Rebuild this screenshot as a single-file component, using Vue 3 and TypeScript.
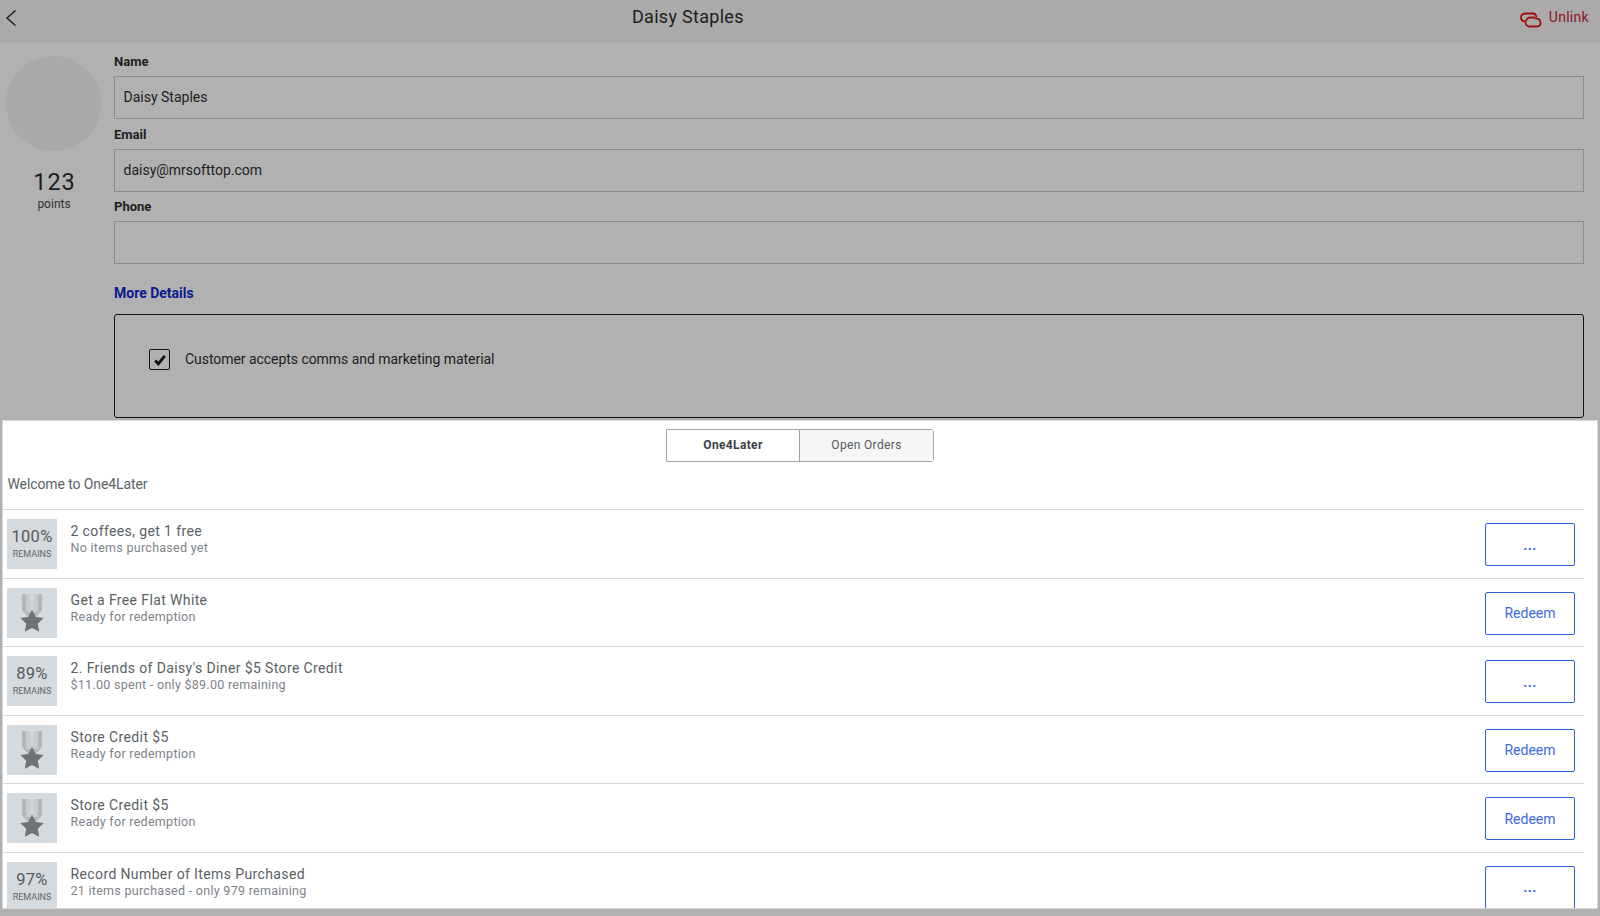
<script setup lang="ts">
interface Row {
  title: string
  sub: string
  pct?: string
  action: string
}
const rows: Row[] = [
  { title: '2 coffees, get 1 free', sub: 'No items purchased yet', pct: '100%', action: '...' },
  { title: 'Get a Free Flat White', sub: 'Ready for redemption', action: 'Redeem' },
  { title: "2. Friends of Daisy's Diner $5 Store Credit", sub: '$11.00 spent - only $89.00 remaining', pct: '89%', action: '...' },
  { title: 'Store Credit $5', sub: 'Ready for redemption', action: 'Redeem' },
  { title: 'Store Credit $5', sub: 'Ready for redemption', action: 'Redeem' },
  { title: 'Record Number of Items Purchased', sub: '21 items purchased - only 979 remaining', pct: '97%', action: '...' },
]
</script>

<template>
  <div class="page">
    <header class="topbar">
      <svg class="back" width="12" height="18" viewBox="0 0 12 18"><path d="M10.5 1.5 2 9l8.500 7.500" fill="none" stroke="#1c1c1c" stroke-width="1.400" /></svg>
      <div class="title">Daisy Staples</div>
      <div class="unlink">
        <svg width="22" height="16" viewBox="0 0 22 16" fill="none" stroke="#a30c0c" stroke-width="1.800"><path d="M16.500 5C16 2.500 15 1.500 13 1.500H6C3 1.500 1 3 1 5.500S3 9.500 6 9.500" /><path d="M14.500 6.500C17 6 20.500 7 20.500 10.500 20.500 13 19 14.500 16.500 14.500H9.500C7 14.500 5.500 12.500 5.500 10.500S7.500 5.500 10 5.500H14.500" /></svg>
        <span>Unlink</span>
      </div>
    </header>
    <section class="profile">
      <div class="side">
        <div class="avatar"></div>
        <div class="num">123</div>
        <div class="pts">points</div>
      </div>
      <div class="form">
        <label class="lbl">Name</label>
        <div class="field">Daisy Staples</div>
        <label class="lbl">Email</label>
        <div class="field">daisy@mrsofttop.com</div>
        <label class="lbl">Phone</label>
        <div class="field"></div>
        <a class="more">More Details</a>
        <div class="consent">
          <span class="check">
            <svg width="14" height="12" viewBox="0 0 14 12"><path d="M2.200 6.500 5.300 9.800 11.800 1.800" fill="none" stroke="#111" stroke-width="2.800" /></svg>
          </span>
          <span class="consent-text">Customer accepts comms and marketing material</span>
        </div>
      </div>
    </section>
    <section class="panel">
      <div class="tabs">
        <div class="tab active">One4Later</div>
        <div class="tab">Open Orders</div>
      </div>
      <div class="welcome">Welcome to One4Later</div>
      <div v-for="(r, i) in rows" :key="i" class="row">
        <div class="badge">
          <template v-if="r.pct">
            <div class="pct">{{ r.pct }}</div>
            <div class="rem">REMAINS</div>
          </template>
          <svg v-else width="50" height="50" viewBox="0 0 50 50">
            <path d="M15 6h20v16l-6 7h-8l-6-7z" fill="#b4b7b9" />
            <path d="M19 6h12v18h-12z" fill="#c9cbcc" />
            <path d="M23.500 6h3v22h-3z" fill="#d4d6d8" />
            <path d="M25 21.500l3.600 7.400 8 1.100-5.800 5.700 1.400 8.100-7.200-3.800-7.200 3.800 1.400-8.100-5.800-5.700 8-1.100z" fill="#707172" />
          </svg>
        </div>
        <div class="info">
          <div class="t">{{ r.title }}</div>
          <div class="s">{{ r.sub }}</div>
        </div>
        <button class="btn" :class="{ dots: r.action === '...' }" type="button">{{ r.action }}</button>
      </div>
    </section>
  </div>
</template>

<style>
html, body { margin: 0; background: #b1b1b1; }
</style>

<style scoped>
.page {
  width: 1600px;
  height: 916px;
  overflow: hidden;
  background: #b1b1b1;
  font-family: Roboto, "Liberation Sans", sans-serif;
  color: #1d1d1d;
  display: flex;
  flex-direction: column;
}
.topbar {
  height: 43px;
  flex: none;
  background: #aaaaaa;
  display: flex;
  align-items: flex-start;
  padding: 0 11px 0 5px;
  box-sizing: border-box;
}
.back { margin-top: 9px; flex: none; }
.title {
  flex: 1;
  text-align: center;
  font-size: 18px;
  line-height: 34px;
  padding-right: 161px;
  letter-spacing: 0.3px;
}
.unlink {
  display: flex;
  align-items: flex-start;
  gap: 7px;
  color: #8a1528;
  font-size: 14px;
  line-height: 34px;
  letter-spacing: 0.3px;
}
.unlink svg { margin-top: 12px; }
.profile {
  display: flex;
  height: 378px;
  flex: none;
  box-sizing: border-box;
  padding: 0 16px 0 6px;
}
.side {
  width: 108px;
  flex: none;
  display: flex;
  flex-direction: column;
  padding-top: 13px;
}
.avatar {
  width: 95px;
  height: 95px;
  border-radius: 50%;
  background: #a9a9a9;
}
.num {
  width: 97px;
  text-align: center;
  font-size: 23.500px;
  line-height: 30px;
  margin-top: 16px;
  letter-spacing: 1px;
}
.pts {
  width: 96px;
  text-align: center;
  font-size: 12px;
  line-height: 16px;
  margin-top: -1px;
  color: #333;
}
.form { flex: 1; min-width: 0; }
.lbl {
  display: block;
  font-size: 13px;
  font-weight: 700;
  line-height: 18px;
  height: 18px;
  margin-top: 7.500px;
  margin-bottom: 5px;
}
.lbl:first-child { margin-top: 10px; }
.field {
  height: 43px;
  box-sizing: border-box;
  border: 1px solid #898d93;
  padding: 0 9px 0 8.500px;
  font-size: 14px;
  line-height: 41px;
}
.lbl + .field { margin-bottom: -1px; }
.more {
  display: block;
  margin-top: 21px;
  font-size: 14px;
  font-weight: 700;
  line-height: 18px;
  color: #0a1a8c;
}
.consent {
  margin-top: 12px;
  height: 104px;
  box-sizing: border-box;
  border: 1px solid #111;
  border-radius: 3px;
  padding: 34px 34px 0;
  display: flex;
  align-items: flex-start;
  gap: 15px;
  font-size: 14px;
  line-height: 20px;
  letter-spacing: -0.05px;
}
.check {
  width: 21px;
  height: 21px;
  box-sizing: border-box;
  border: 1px solid #111;
  border-radius: 2px;
  display: flex;
  align-items: center;
  justify-content: center;
  flex: none;
}
.panel {
  flex: none;
  height: 487px;
  margin: 0 3px;
  background: #fff;
  overflow: hidden;
  box-sizing: border-box;
  padding: 0 13px 0 0;
  box-shadow: 0 0 0 1px #d8d8d8;
}
.tabs {
  width: 268px;
  height: 33px;
  margin: 8px 0 0 663px;
  display: flex;
  box-sizing: border-box;
  border: 1px solid #a0a5ad;
  border-radius: 0 3px 3px 0;
  font-size: 12px;
  line-height: 31px;
  text-align: center;
  letter-spacing: 0.35px;
  color: #555a60;
}
.tab { flex: 1; background: #f6f6f6; }
.tab.active {
  flex: none;
  width: 132px;
  background: #fff;
  border-right: 1px solid #a0a5ad;
  font-weight: 700;
  color: #3a3f47;
}
.welcome {
  height: 47px;
  box-sizing: border-box;
  padding: 13px 0 0 4.500px;
  font-size: 14px;
  line-height: 18px;
  letter-spacing: -0.1px;
  color: #5a5f65;
}
.row {
  height: 68.600px;
  flex: none;
  box-sizing: border-box;
  border-top: 1px solid #d6d9dd;
  display: flex;
  align-items: flex-start;
  padding: 9px 9px 0 4px;
}
.badge {
  width: 50px;
  height: 50px;
  flex: none;
  background: #d5dade;
  text-align: center;
  color: #555a60;
}
.pct {
  font-size: 16.500px;
  line-height: 20px;
  margin-top: 8px;
  letter-spacing: 0.3px;
}
.rem {
  font-size: 9px;
  line-height: 12px;
  margin-top: 1px;
  color: #5f6468;
}
.info {
  flex: 1;
  min-width: 0;
  padding: 4px 0 0 13.500px;
}
.t {
  font-size: 14px;
  line-height: 17px;
  letter-spacing: 0.38px;
  color: #5a5f65;
}
.s {
  font-size: 12.500px;
  line-height: 16px;
  letter-spacing: 0.28px;
  color: #7d8288;
}
.btn {
  width: 90px;
  height: 43px;
  margin-top: 4px;
  flex: none;
  background: #fff;
  border: 1px solid #2f62d8;
  border-radius: 2px;
  color: #3c6ae0;
  font-family: inherit;
  font-size: 14px;
  padding: 0;
}
.btn.dots { font-weight: 700; letter-spacing: 0.5px; }
</style>
